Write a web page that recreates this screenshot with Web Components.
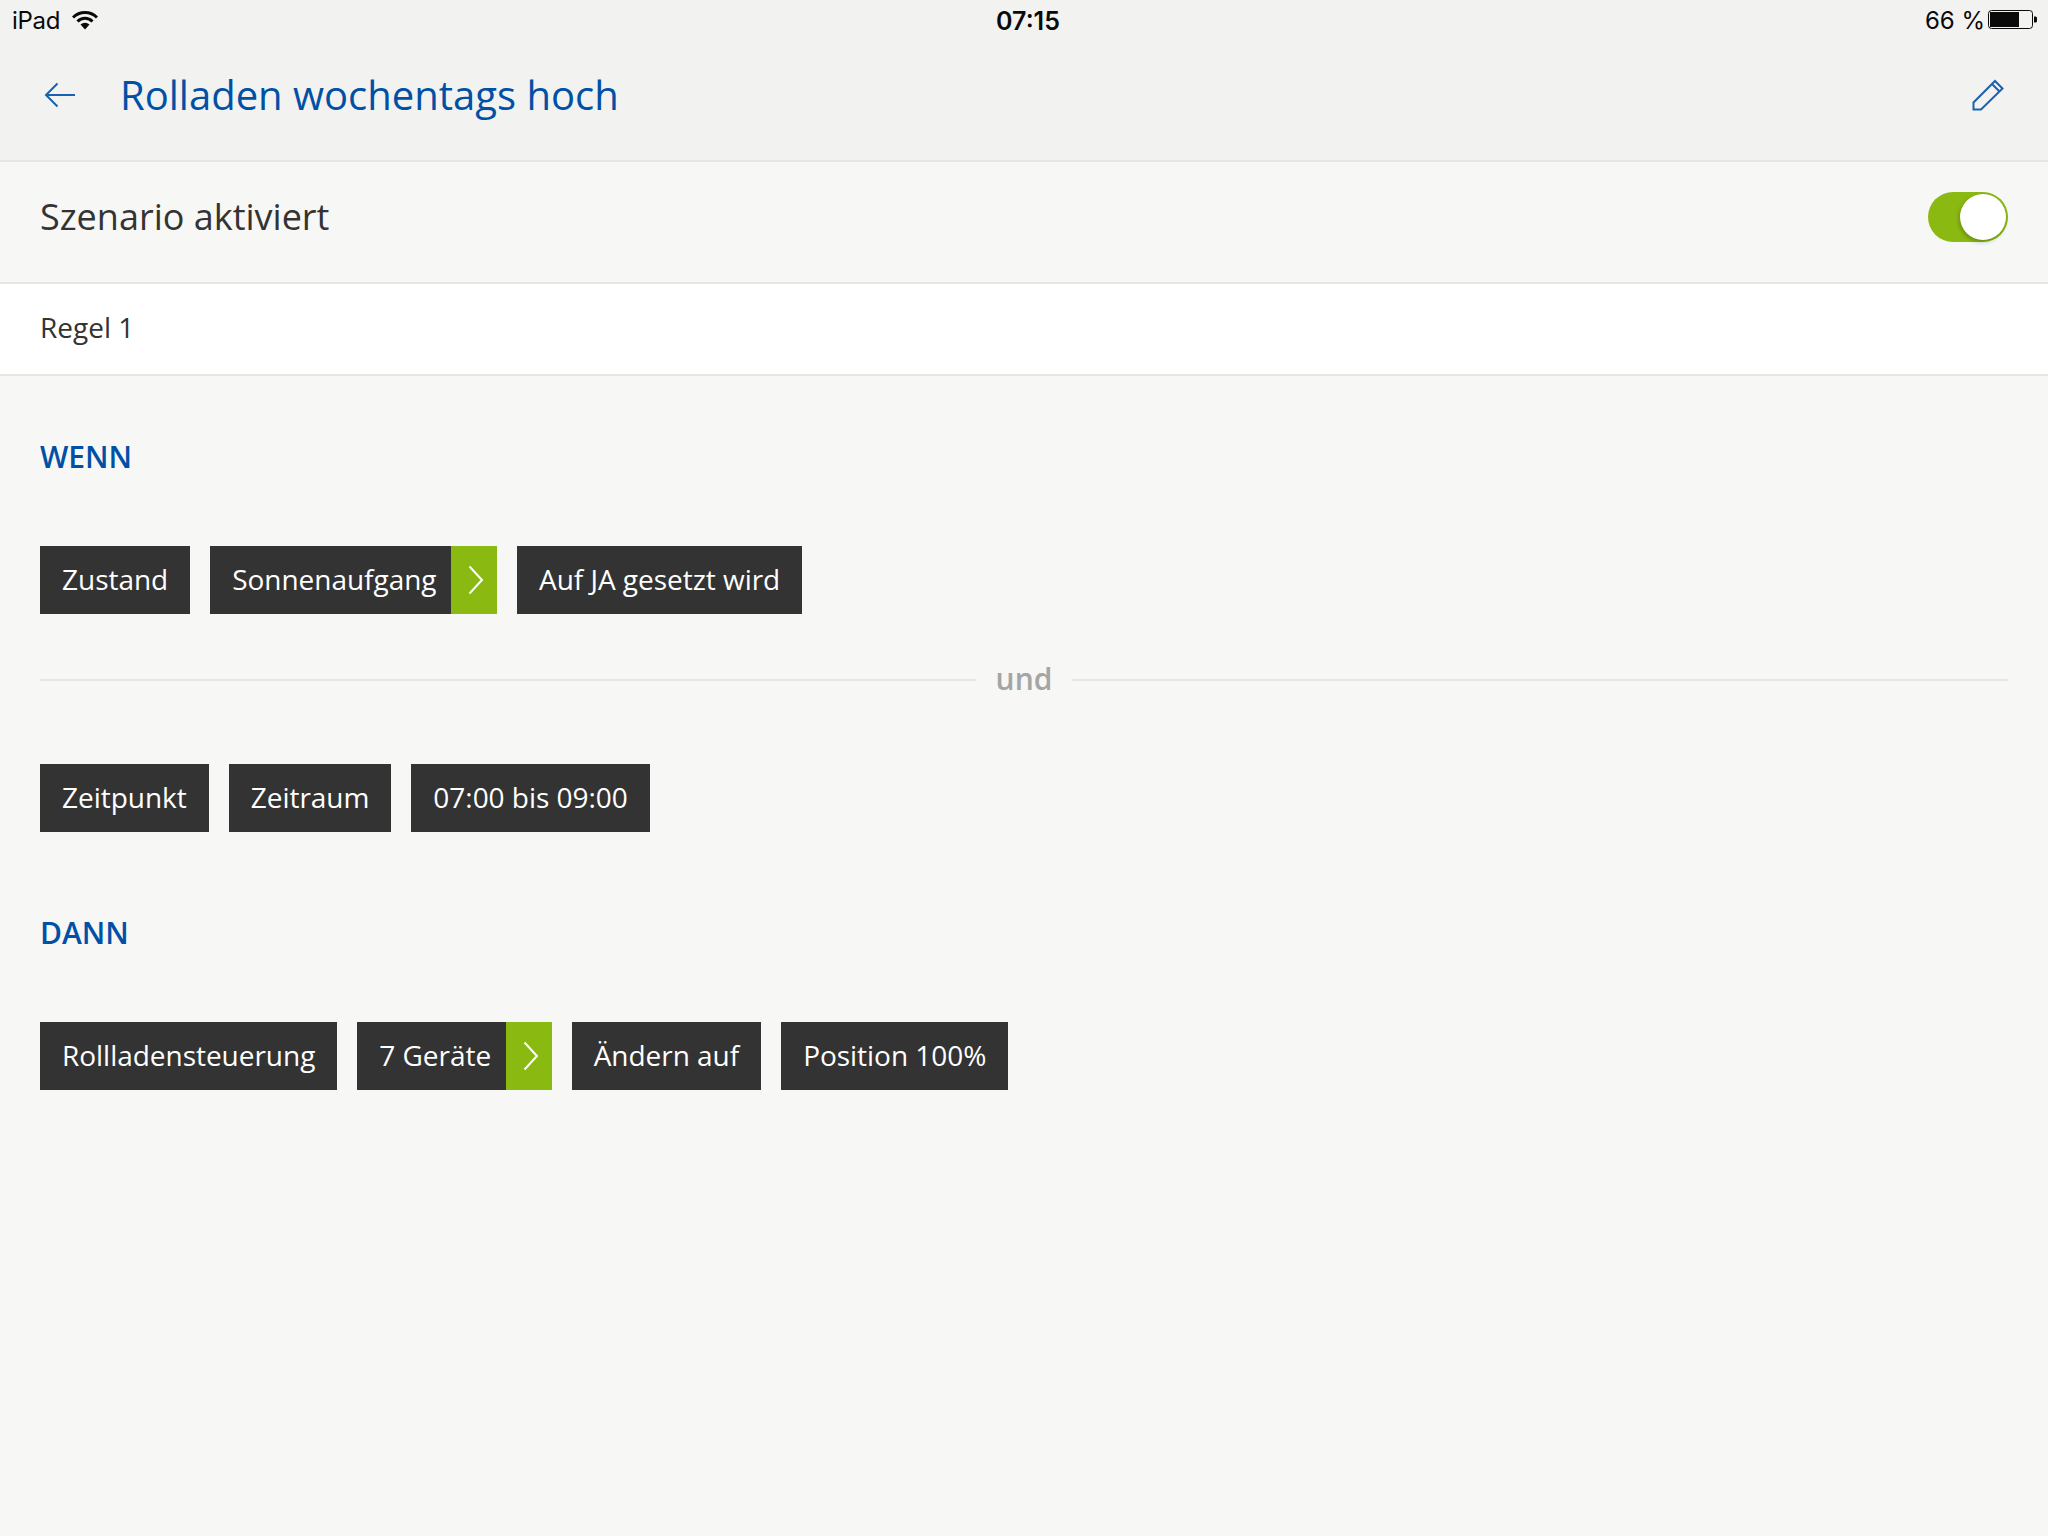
<!DOCTYPE html>
<html lang="de">
<head>
<meta charset="utf-8">
<title>Rolladen wochentags hoch</title>
<style>
    html, body { margin: 0; height: 100%; }
    body {
        width: 2048px;
        height: 1536px;
        overflow: hidden;
        background: #f7f7f5;
        font-family: "Open Sans", sans-serif;
    }
    main { display: block; padding: 0 40px; }
</style>
</head>
<body>
<status-bar></status-bar>
<app-header>Rolladen wochentags hoch</app-header>
<toggle-row>Szenario aktiviert</toggle-row>
<rule-row>Regel 1</rule-row>
<main>
    <section-title style="--top:61px">WENN</section-title>
    <chip-row style="--top:69px">
        <rule-chip>Zustand</rule-chip>
        <rule-chip more>Sonnenaufgang</rule-chip>
        <rule-chip>Auf JA gesetzt wird</rule-chip>
    </chip-row>
    <and-divider>und</and-divider>
    <chip-row style="--top:64px">
        <rule-chip>Zeitpunkt</rule-chip>
        <rule-chip>Zeitraum</rule-chip>
        <rule-chip>07:00 bis 09:00</rule-chip>
    </chip-row>
    <section-title style="--top:81px">DANN</section-title>
    <chip-row style="--top:69px">
        <rule-chip>Rollladensteuerung</rule-chip>
        <rule-chip more>7 Geräte</rule-chip>
        <rule-chip>Ändern auf</rule-chip>
        <rule-chip>Position 100%</rule-chip>
    </chip-row>
</main>

<script>
function define(name, markup) {
    customElements.define(name, class extends HTMLElement {
        constructor() {
            super();
            this.attachShadow({mode: 'open'}).innerHTML = markup;
        }
    });
}

define('status-bar', `
    <style>
        :host {
            display: flex;
            box-sizing: border-box;
            height: 40px;
            align-items: center;
            background: #f2f2f1;
            color: #0a0a0a;
            font: 24px/40px Inter, "Liberation Sans", sans-serif;
            padding: 0 10px 0 12px;
        }
        .side { flex: 1; display: flex; align-items: center; }
        .right { justify-content: flex-end; }
        .text { position: relative; top: 1px; }
        .ipad { letter-spacing: -.3px; }
        .time { font-weight: 600; font-size: 25px; margin-left: 6px; }
        .wifi { margin-left: 12px; }
        .batt { margin-left: 3px; }
    </style>
    <div class="side">
        <span class="text ipad">iPad</span>
        <svg class="wifi" width="26" height="20" viewBox="0 0 26 20">
            <path d="M1 7.500a17 17 0 0 1 24 0" fill="none" stroke="#0a0a0a" stroke-width="3"/>
            <path d="M5.500 11.500a10.500 10.500 0 0 1 15 0" fill="none" stroke="#0a0a0a" stroke-width="3"/>
            <path d="M8.500 14.500a7 7 0 0 1 9 0L13 19.500z" fill="#0a0a0a"/>
        </svg>
    </div>
    <span class="text time">07:15</span>
    <div class="side right">
        <span class="text">66 %</span>
        <svg class="batt" width="50" height="20" viewBox="0 0 50 20">
            <rect x=".5" y=".5" width="44" height="18" rx="3" fill="none" stroke="#0a0a0a"/>
            <rect x="2" y="2" width="29" height="15" fill="#0a0a0a"/>
            <path d="M46 6.500h1.500q1.500 0 1.500 1.500v3q0 1.500 -1.500 1.500h-1.500z" fill="#0a0a0a"/>
        </svg>
    </div>
`);

define('app-header', `
    <style>
        :host {
            display: flex;
            height: 120px;
            align-items: center;
            background: #f2f2f1;
            border-bottom: 2px solid #e6e6e4;
            padding: 0 44px;
            color: #0050a5;
        }
        .back { margin-right: 44px; flex: none; }
        .title { flex: 1; font-size: 40px; line-height: 56px; margin-top: -11px; }
        svg { margin-top: -10px; }
    </style>
    <svg class="back" width="32" height="26" viewBox="0 0 32 26">
        <path d="M31 13H2M13.500 1.500L2 13l11.500 11.500" fill="none" stroke="#1a62b0" stroke-width="2"/>
    </svg>
    <div class="title"><slot></slot></div>
    <svg width="32" height="32" viewBox="0 0 32 32">
        <path d="M1.500 30.500v-7L23 2l7.500 7.500L9 30.500zM20 5l7.500 7.500" fill="none" stroke="#1a62b0" stroke-width="2"/>
    </svg>
`);

define('toggle-row', `
    <style>
        :host {
            display: flex;
            box-sizing: border-box;
            height: 122px;
            align-items: center;
            justify-content: space-between;
            border-bottom: 2px solid #e6e6e4;
            padding: 0 40px 10px;
            color: #333;
            font-size: 36px;
        }
        .label { margin-top: -2px; }
        .switch {
            position: relative;
            width: 80px;
            height: 50px;
            border-radius: 25px;
            background: #8aba12;
        }
        .knob {
            position: absolute;
            top: 2px;
            right: 2px;
            width: 46px;
            height: 46px;
            border-radius: 50%;
            background: #fff;
            box-shadow: -1px 2px 4px rgba(0,0,0,.25);
        }
    </style>
    <span class="label"><slot></slot></span>
    <div class="switch"><div class="knob"></div></div>
`);

define('rule-row', `
    <style>
        :host {
            display: flex;
            box-sizing: border-box;
            height: 92px;
            align-items: center;
            background: #fff;
            border-bottom: 2px solid #e6e6e4;
            padding: 0 40px 4px;
            color: #333;
            font-size: 28px;
        }
    </style>
    <slot></slot>
`);

define('section-title', `
    <style>
        :host {
            display: block;
            margin-top: var(--top);
            color: #0050a5;
            font-size: 30px;
            line-height: 40px;
            font-weight: 600;
        }
    </style>
    <slot></slot>
`);

define('chip-row', `
    <style>
        :host {
            display: flex;
            gap: 20px;
            margin-top: var(--top);
        }
    </style>
    <slot></slot>
`);

define('rule-chip', `
    <style>
        :host {
            display: flex;
            height: 68px;
            background: #333;
            color: #fff;
            font-size: 28px;
            letter-spacing: -.03px;
            line-height: 66px;
        }
        .label { padding: 0 22px; }
        :host([more]) .label { padding-right: 14.5px; }
        .more {
            display: none;
            box-sizing: border-box;
            width: 46px;
            padding-left: 17px;
            align-items: center;
            background: #8aba12;
        }
        :host([more]) .more { display: flex; }
    </style>
    <span class="label"><slot></slot></span>
    <span class="more">
        <svg width="16" height="30" viewBox="0 0 16 30">
            <path d="M1.500 1.500L14 15 1.500 28.500" fill="none" stroke="#fff" stroke-width="2"/>
        </svg>
    </span>
`);

define('and-divider', `
    <style>
        :host {
            display: flex;
            align-items: center;
            gap: 20px;
            margin-top: 46px;
            height: 40px;
            color: #a5a5a5;
            font-size: 30px;
            font-weight: 600;
        }
        .line { flex: 1; height: 2px; background: #e6e6e4; }
        .word { margin-top: -3px; }
    </style>
    <div class="line"></div>
    <span class="word"><slot></slot></span>
    <div class="line"></div>
`);
</script>
</body>
</html>
